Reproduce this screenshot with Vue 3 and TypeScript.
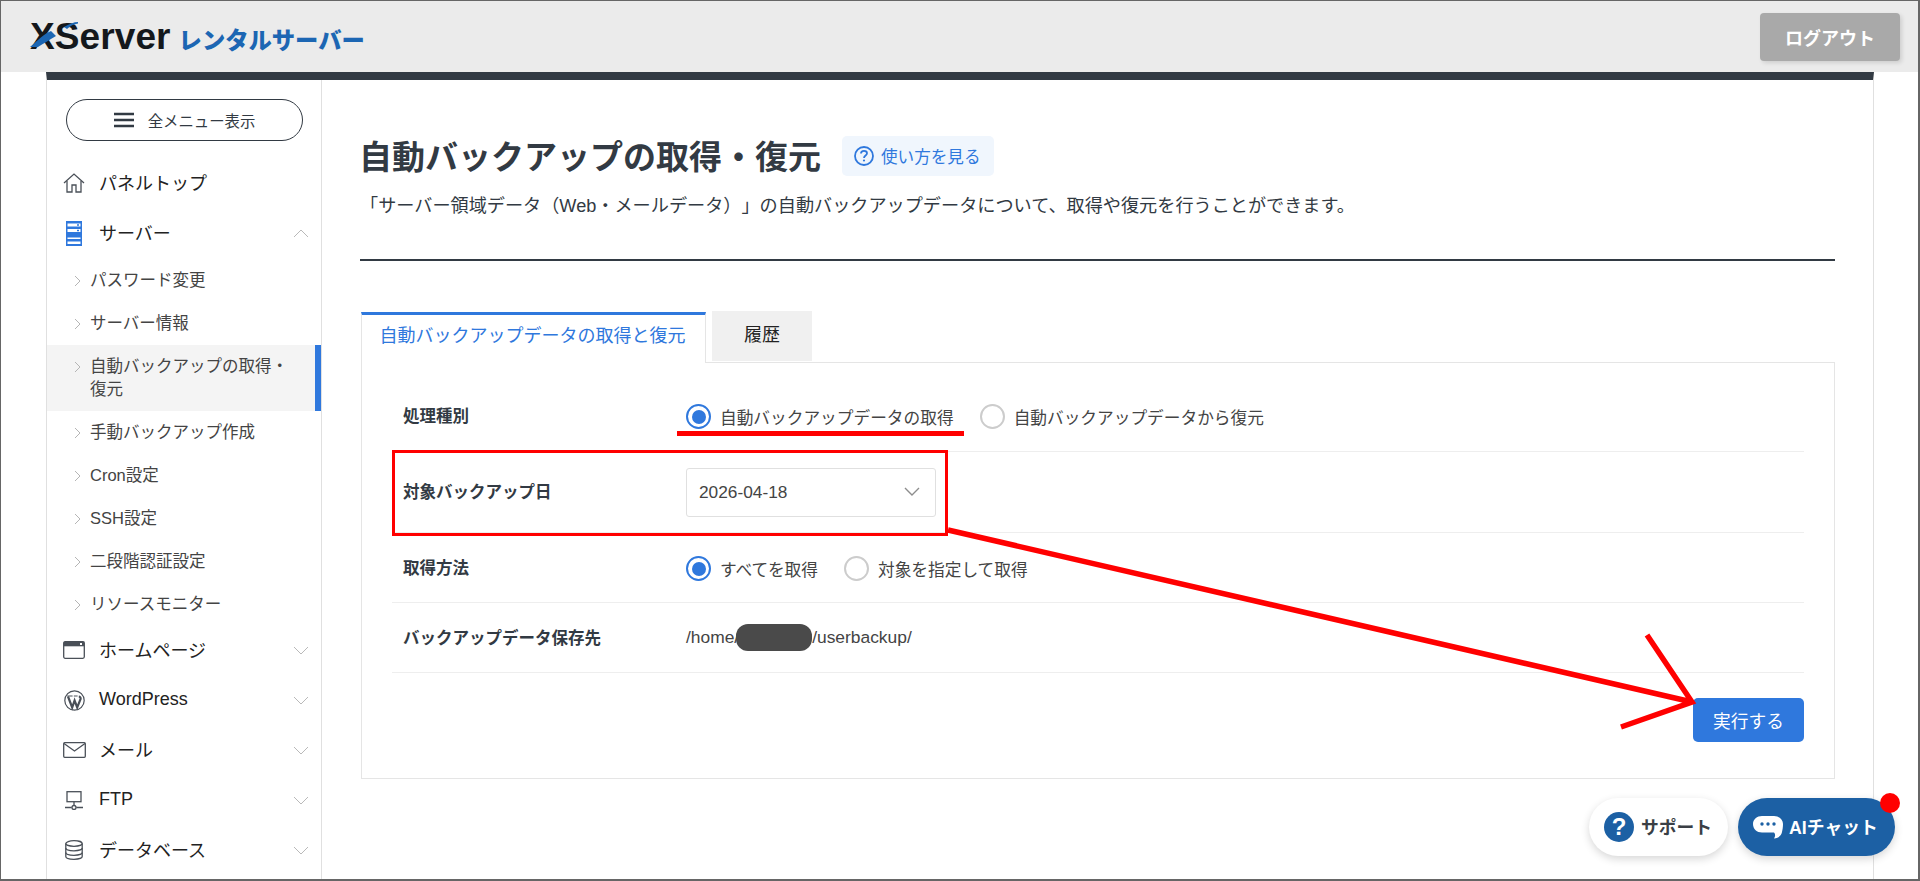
<script setup lang="ts">
type NavIcon = 'window' | 'wordpress' | 'mail' | 'ftp' | 'database';

const subItems = [
	{ label: 'パスワード変更' },
	{ label: 'サーバー情報' },
	{ label: '自動バックアップの取得・復元', active: true },
	{ label: '手動バックアップ作成' },
	{ label: 'Cron設定' },
	{ label: 'SSH設定' },
	{ label: '二段階認証設定' },
	{ label: 'リソースモニター' },
];

const closedItems: { label: string; icon: NavIcon }[] = [
	{ label: 'ホームページ', icon: 'window' },
	{ label: 'WordPress', icon: 'wordpress' },
	{ label: 'メール', icon: 'mail' },
	{ label: 'FTP', icon: 'ftp' },
	{ label: 'データベース', icon: 'database' },
];
</script>

<template>
	<div class="page">
		<header class="header">
			<div class="logo">
				<span class="logo-mark">XServer</span>
				<svg class="logo-slash" width="50" height="28" viewBox="0 0 50 28">
					<path d="M0 26 C8 19 14 13 21 10 L26 15 C19 19 13 23 8 26 Z" fill="#1c66b3" />
					<path d="M34 6 C39 3 44 1 48 1 L48 2.5 C44 3 40 5 37 8 Z" fill="#1c66b3" />
				</svg>
				<span class="logo-sub">レンタルサーバー</span>
			</div>
			<button class="logout">ログアウト</button>
		</header>

		<div class="container">
			<aside class="sidebar">
				<button class="menu-button">
					<svg width="20" height="16" viewBox="0 0 20 16">
						<path d="M0 2h20M0 8h20M0 14h20" stroke="#323a43" stroke-width="2.4" />
					</svg>
					<span>全メニュー表示</span>
				</button>

				<nav class="nav">
					<a class="nav-row">
						<span class="nav-icon">
							<svg width="22" height="20" viewBox="0 0 22 20" fill="none" stroke="#4a5058" stroke-width="1.3">
								<path d="M1 10 L11 1 L21 10" />
								<path d="M4 8 V19 H9 V12 H13 V19 H18 V8" />
							</svg>
						</span>
						<span class="nav-label">パネルトップ</span>
					</a>

					<a class="nav-row">
						<span class="nav-icon">
							<svg width="16" height="25" viewBox="0 0 16 25">
								<rect width="16" height="25" fill="#2f78dd" />
								<path d="M1.5 2.5h13v3h-13zM1.5 8h13v3h-13zM1.5 16.5h13v1.6h-13zM1.5 20.5h13v2.5h-13z" fill="#fff" />
								<path d="M11 3.2h2v1.5h-2zM11 8.8h2v1.5h-2z" fill="#2f78dd" />
							</svg>
						</span>
						<span class="nav-label">サーバー</span>
						<svg class="nav-chevron" width="16" height="9" viewBox="0 0 16 9" fill="none" stroke="#b9b9b9">
							<path d="M1 8 L8 1 L15 8" />
						</svg>
					</a>

					<ul class="sub-list">
						<li v-for="item in subItems" :key="item.label" class="sub-item" :class="{ active: item.active }">
							<svg class="sub-chevron" width="7" height="12" viewBox="0 0 7 12" fill="none" stroke="#b5b5b5">
								<path d="M1 1 L6 6 L1 11" />
							</svg>
							<span>{{ item.label }}</span>
						</li>
					</ul>

					<a v-for="item in closedItems" :key="item.label" class="nav-row">
						<span class="nav-icon">
							<svg v-if="item.icon === 'window'" width="22" height="18" viewBox="0 0 22 18" fill="none">
								<rect x="0.7" y="0.7" width="20.6" height="16.6" rx="1.5" stroke="#4a5058" stroke-width="1.3" />
								<rect x="0.7" y="0.7" width="20.6" height="4.6" fill="#4a5058" />
								<rect x="17" y="2" width="2" height="2" fill="#fff" />
							</svg>
							<svg v-else-if="item.icon === 'wordpress'" width="21" height="21" viewBox="0 0 21 21" fill="none">
								<circle cx="10.5" cy="10.5" r="9.7" stroke="#4a5058" stroke-width="1.2" />
								<path d="M4 6.5 L8.2 17.5 L10.6 10.5 L13.2 17.5 L16.6 9 C17 7.4 15.6 6.6 14.8 6.5" stroke="#4a5058" stroke-width="2.2" />
								<path d="M3.2 6 H8.6 M9.8 6 H13.6" stroke="#4a5058" stroke-width="1.1" />
							</svg>
							<svg v-else-if="item.icon === 'mail'" width="23" height="16" viewBox="0 0 23 16" fill="none" stroke="#4a5058" stroke-width="1.3">
								<rect x="0.7" y="0.7" width="21.6" height="14.6" rx="1" />
								<path d="M1 1.5 L11.5 9 L22 1.5" />
							</svg>
							<svg v-else-if="item.icon === 'ftp'" width="18" height="19" viewBox="0 0 18 19" fill="none" stroke="#4a5058" stroke-width="1.3">
								<rect x="2" y="0.7" width="14" height="10" />
								<path d="M9 10.7 V14 M0 16.5 H6.7 M11.3 16.5 H18" />
								<circle cx="9" cy="16.5" r="2" />
							</svg>
							<svg v-else width="18" height="20" viewBox="0 0 18 20" fill="none" stroke="#4a5058" stroke-width="1.3">
								<ellipse cx="9" cy="3.5" rx="8.2" ry="2.8" />
								<path d="M0.8 3.5 V16.5 C0.8 18 4 19.3 9 19.3 C14 19.3 17.2 18 17.2 16.5 V3.5" />
								<path d="M0.8 8 C0.8 9.5 4 10.8 9 10.8 C14 10.8 17.2 9.5 17.2 8 M0.8 12.5 C0.8 14 4 15.3 9 15.3 C14 15.3 17.2 14 17.2 12.5" />
							</svg>
						</span>
						<span class="nav-label">{{ item.label }}</span>
						<svg class="nav-chevron" width="16" height="9" viewBox="0 0 16 9" fill="none" stroke="#b9b9b9">
							<path d="M1 1 L8 8 L15 1" />
						</svg>
					</a>
				</nav>
			</aside>

			<main class="main">
				<div class="title-row">
					<h1 class="title">自動バックアップの取得・復元</h1>
					<a class="help">
						<svg width="20" height="20" viewBox="0 0 20 20" fill="none">
							<circle cx="10" cy="10" r="9" stroke="#2f78dd" stroke-width="1.8" />
							<path d="M7 7.6 C7 5.6 8.5 4.9 10 4.9 C11.6 4.9 13 5.8 13 7.3 C13 9.4 10 9.5 10 11.9" stroke="#2f78dd" stroke-width="1.8" />
							<circle cx="10" cy="14.5" r="1.1" fill="#2f78dd" />
						</svg>
						<span>使い方を見る</span>
					</a>
				</div>
				<p class="description">「サーバー領域データ（Web・メールデータ）」の自動バックアップデータについて、取得や復元を行うことができます。</p>
				<hr class="divider" />

				<div class="tabs">
					<div class="tab active">自動バックアップデータの取得と復元</div>
					<div class="tab">履歴</div>
				</div>

				<section class="panel">
					<div class="row">
						<div class="row-label">処理種別</div>
						<div class="row-value radios">
							<label class="radio checked"><i></i>自動バックアップデータの取得</label>
							<label class="radio"><i></i>自動バックアップデータから復元</label>
						</div>
					</div>
					<div class="row row-select">
						<div class="row-label">対象バックアップ日</div>
						<div class="row-value">
							<div class="select">
								<span>2026-04-18</span>
								<svg width="16" height="10" viewBox="0 0 16 10" fill="none" stroke="#8d8d8d" stroke-width="1.4">
									<path d="M1 1 L8 8 L15 1" />
								</svg>
							</div>
						</div>
					</div>
					<div class="row">
						<div class="row-label">取得方法</div>
						<div class="row-value radios">
							<label class="radio checked"><i></i>すべてを取得</label>
							<label class="radio"><i></i>対象を指定して取得</label>
						</div>
					</div>
					<div class="row">
						<div class="row-label">バックアップデータ保存先</div>
						<div class="row-value path">
							<span>/home/</span><span class="masked"></span><span>/userbackup/</span>
						</div>
					</div>
					<div class="actions">
						<button class="run">実行する</button>
					</div>
				</section>
			</main>
		</div>

		<div class="float-buttons">
			<button class="float support">
				<span class="support-icon">?</span>
				<span class="float-text">サポート</span>
			</button>
			<button class="float chat">
				<svg width="30" height="24" viewBox="0 0 30 24">
					<path d="M9 1 H21 C26 1 30 4.5 30 9 C30 12 29.5 15 29 17 C28.5 20 26 23 21 23.5 C22.5 21.5 22.5 19 21 17.5 H9 C4 17.5 0 14 0 9 C0 4.5 4 1 9 1 Z" fill="#fff" />
					<circle cx="9" cy="9" r="1.7" fill="#1c60a4" />
					<circle cx="15" cy="9" r="1.7" fill="#1c60a4" />
					<circle cx="21" cy="9" r="1.7" fill="#1c60a4" />
				</svg>
				<span class="float-text">AIチャット</span>
				<i class="chat-dot"></i>
			</button>
		</div>

		<!-- 赤の注釈は画面の上に載せるだけ -->
		<svg class="annotation" width="1920" height="881" viewBox="0 0 1920 881" fill="none" stroke="#ff0000">
			<path d="M677 433.5 H964" stroke-width="5" />
			<rect x="393.5" y="451.5" width="553" height="83" stroke-width="3" />
			<path d="M948 530 L1692 702 M1647 635 L1692 702 L1621 727" stroke-width="5.5" />
		</svg>
	</div>
</template>

<style scoped>
.page {
	position: relative;
	box-sizing: border-box;
	width: 1920px;
	height: 881px;
	overflow: hidden;
	background: #fff;
	border-style: solid;
	border-color: #666;
	border-width: 1px 2px 2px 1px;
	font-family: 'Liberation Sans', 'Noto Sans CJK JP', sans-serif;
	color: #323a43;
}

.header {
	display: flex;
	align-items: center;
	justify-content: space-between;
	height: 71px;
	padding: 0 18px 0 29px;
	background: #ebebeb;
}

.logo {
	position: relative;
	display: flex;
	align-items: baseline;
	gap: 8px;
	margin-top: 0;
}

.logo-mark {
	font-size: 37px;
	font-weight: 700;
	letter-spacing: 0.1px;
	color: #14181c;
}

.logo-slash {
	position: absolute;
	left: 0;
	bottom: 9px;
}

.logo-sub {
	font-size: 23.3px;
	font-weight: 900;
	color: #1c66b3;
}

.logout {
	width: 140px;
	height: 48px;
	border: none;
	border-radius: 4px;
	background: #a9a9a9;
	color: #fff;
	font-family: inherit;
	font-size: 18px;
	font-weight: 700;
	box-shadow: 2px 2px 4px rgba(0, 0, 0, 0.12);
}

.container {
	display: flex;
	height: 808px;
	margin: 0 44px 0 45px;
	border-top: 8px solid #323a43;
	border-left: 1px solid #e0e0e0;
	border-right: 1px solid #e0e0e0;
}

.sidebar {
	flex: none;
	width: 274px;
	padding-top: 19px;
	border-right: 1px solid #e0e0e0;
}

.menu-button {
	display: flex;
	align-items: center;
	justify-content: center;
	gap: 14px;
	width: 237px;
	height: 42px;
	margin-left: 19px;
	padding: 0;
	border: 1px solid #323a43;
	border-radius: 21px;
	background: #fff;
	color: #323a43;
	font-family: inherit;
	font-size: 15.4px;
}

.nav {
	margin-top: 17px;
}

.nav-row {
	display: flex;
	align-items: center;
	height: 50px;
	padding-left: 15px;
	color: #222;
	font-size: 18px;
}

.nav-icon {
	display: flex;
	align-items: center;
	justify-content: center;
	flex: none;
	width: 24px;
	margin-right: 13px;
}

.nav-label {
	flex: 1;
	padding-bottom: 2px;
}

.nav-chevron {
	margin-right: 12px;
}

.sub-list {
	list-style: none;
	margin: 1px 0 -1px;
	padding: 0;
}

.sub-item {
	position: relative;
	box-sizing: border-box;
	padding: 10px 26px 10px 43px;
	font-size: 16.5px;
	line-height: 23px;
	color: #444;
}

.sub-item.active {
	background: #f4f4f4;
	border-right: 6px solid #2f78dd;
	padding-right: 20px;
}

.sub-chevron {
	position: absolute;
	left: 27px;
	top: 16px;
}

.main {
	flex: 1;
	min-width: 0;
	padding: 56px 38px 0 38px;
}

.title-row {
	display: flex;
	align-items: center;
	gap: 21px;
	height: 40px;
}

.title {
	margin: 0 0 0 -1px;
	padding-top: 4px;
	font-size: 33px;
	font-weight: 700;
	line-height: 40px;
	color: #323a43;
}

.help {
	display: flex;
	align-items: center;
	gap: 7px;
	height: 40px;
	padding: 0 13px 0 12px;
	border-radius: 5px;
	background: #f0f6fd;
	color: #2f78dd;
	font-size: 16.6px;
}

.description {
	margin: 19px 0 0;
	font-size: 18.15px;
	line-height: 22px;
	color: #323a43;
	text-spacing-trim: space-all;
}

.divider {
	height: 2px;
	margin: 42px 0 0;
	border: none;
	background: #323a43;
}

.tabs {
	display: flex;
	align-items: flex-start;
	gap: 6px;
	margin-top: 50px;
	margin-bottom: -1px;
	margin-left: 1px;
}

.tab {
	box-sizing: border-box;
	display: flex;
	align-items: center;
	justify-content: center;
	height: 50px;
	padding: 0 32px 6px;
	background: #f0f0f0;
	color: #222;
	font-size: 18px;
}

.tab.active {
	position: relative;
	width: 345px;
	height: 51px;
	margin-top: 1px;
	padding: 0 2px 10px 0;
	background: #fff;
	color: #2f78dd;
	border-top: 3px solid #2f78dd;
	border-left: 1px solid #e5e5e5;
	border-right: 1px solid #e5e5e5;
	z-index: 1;
}

.panel {
	box-sizing: border-box;
	height: 417px;
	margin-left: 1px;
	padding: 19px 30px 0;
	border: 1px solid #e5e5e5;
}

.row {
	display: flex;
	align-items: center;
	height: 69px;
	border-bottom: 1px solid #eeeeee;
}

.row:first-child {
	height: 67px;
	padding-bottom: 2px;
}

.row-select {
	height: 80px;
}

.row-label {
	flex: none;
	box-sizing: border-box;
	width: 294px;
	padding: 0 0 2px 11px;
	font-size: 16.5px;
	font-weight: 700;
	color: #323a43;
}

.row-value {
	font-size: 16.5px;
	color: #444;
}

.radios {
	display: flex;
	align-items: center;
	gap: 26px;
	padding-top: 2px;
}

.radio {
	display: flex;
	align-items: center;
	gap: 9px;
	font-size: 16.7px;
}

.radio i {
	box-sizing: border-box;
	position: relative;
	width: 25px;
	height: 25px;
	border: 2px solid #cccccc;
	border-radius: 50%;
}

.radio.checked i {
	border-color: #2f78dd;
}

.radio.checked i::after {
	content: '';
	position: absolute;
	top: 3.5px;
	left: 3.5px;
	width: 14px;
	height: 14px;
	border-radius: 50%;
	background: #2f78dd;
}

.select {
	display: flex;
	align-items: center;
	justify-content: space-between;
	box-sizing: border-box;
	width: 250px;
	height: 49px;
	padding: 0 15px 0 12px;
	border: 1px solid #e0e0e0;
	border-radius: 3px;
	font-size: 17.3px;
	color: #444;
}

.path {
	display: flex;
	align-items: center;
	font-size: 17.4px;
}

.masked {
	width: 76px;
	height: 27px;
	margin-left: -3px;
	border-radius: 12px;
	background: #4a4a4a;
}

.actions {
	display: flex;
	justify-content: flex-end;
	margin-top: 25px;
}

.run {
	width: 111px;
	height: 44px;
	border: none;
	border-radius: 5px;
	background: #2f78dd;
	color: #fff;
	font-family: inherit;
	font-size: 17.7px;
	padding-bottom: 2px;
}

.float-buttons {
	position: absolute;
	top: 797px;
	right: 23px;
	display: flex;
	gap: 10px;
}

.float {
	display: flex;
	align-items: center;
	height: 58px;
	border: none;
	border-radius: 29px;
	font-family: inherit;
	font-size: 17.8px;
	font-weight: 700;
	box-shadow: 0 3px 8px rgba(0, 0, 0, 0.16);
}

.float-text {
	padding-bottom: 3px;
}

.support {
	width: 139px;
	gap: 7px;
	padding: 0 0 0 15px;
	background: #fff;
	color: #3a3f45;
}

.support-icon {
	width: 30px;
	height: 30px;
	border-radius: 50%;
	background: #1c60a4;
	color: #fff;
	font-size: 24px;
	line-height: 30px;
	text-align: center;
}

.chat {
	position: relative;
	width: 157px;
	gap: 6px;
	padding: 0 0 0 15px;
	background: #1c60a4;
	color: #fff;
}

.chat-dot {
	position: absolute;
	top: -5px;
	right: -5px;
	width: 20px;
	height: 20px;
	border-radius: 50%;
	background: #ff0000;
}

.annotation {
	position: absolute;
	top: -1px;
	left: -1px;
	pointer-events: none;
}
</style>

<style>
html,
body {
	margin: 0;
	background: #fff;
}
</style>
